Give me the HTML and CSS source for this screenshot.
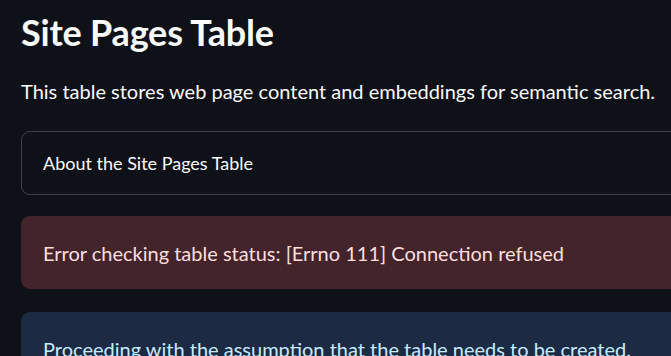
FILE: index.html
```html
<!DOCTYPE html>
<html lang="en">
  <head>
    <meta charset="UTF-8" />
    <meta name="viewport" content="width=device-width, initial-scale=1.0" />
    <title>Site Pages Table</title>
    <link rel="stylesheet" href="styles.css">
  </head>
  <body>
    <div class="main">
      <h1 class="title">Site Pages Table</h1>
      <p class="intro">This table stores web page content and embeddings for semantic search.</p>

      <div class="expander">
        <span class="expander-label">About the Site Pages Table</span>
      </div>

      <div class="alert alert-error">
        Error checking table status: [Errno 111] Connection refused
      </div>

      <div class="alert alert-info">
        Proceeding with the assumption that the table needs to be created.
      </div>
    </div>
  </body>
</html>
```

FILE: styles.css
```css
html,
body {
  margin: 0;
  background-color: #0e1117;
  overflow: hidden;
}
body {
  font-family: Lato, "Noto Sans", sans-serif;
  color: #fafafa;
}
.main {
  width: 760px;
  padding-left: 21px;
  display: flex;
  flex-direction: column;
}
.title {
  font-size: 36px;
  font-weight: 700;
  line-height: 40px;
  margin: 12px 0 0 0;
  letter-spacing: -0.2px;
}
.intro {
  font-size: 20px;
  line-height: 28px;
  margin: 25px 0 0 0;
}
.expander {
  margin-top: 26px;
  height: 62px;
  border: 1px solid rgba(250, 250, 250, 0.2);
  border-radius: 9px;
  display: flex;
  align-items: center;
  padding-left: 21px;
}
.expander-label {
  font-size: 18px;
}
.alert {
  margin-top: 21px;
  height: 73px;
  border-radius: 9px;
  padding-left: 22px;
  display: flex;
  align-items: center;
  font-size: 20px;
}
.alert-error {
  background-color: #42242a;
  color: #ffdede;
}
.alert-info {
  margin-top: 23px;
  background-color: #1c2a43;
  color: #c7ebff;
}
```
